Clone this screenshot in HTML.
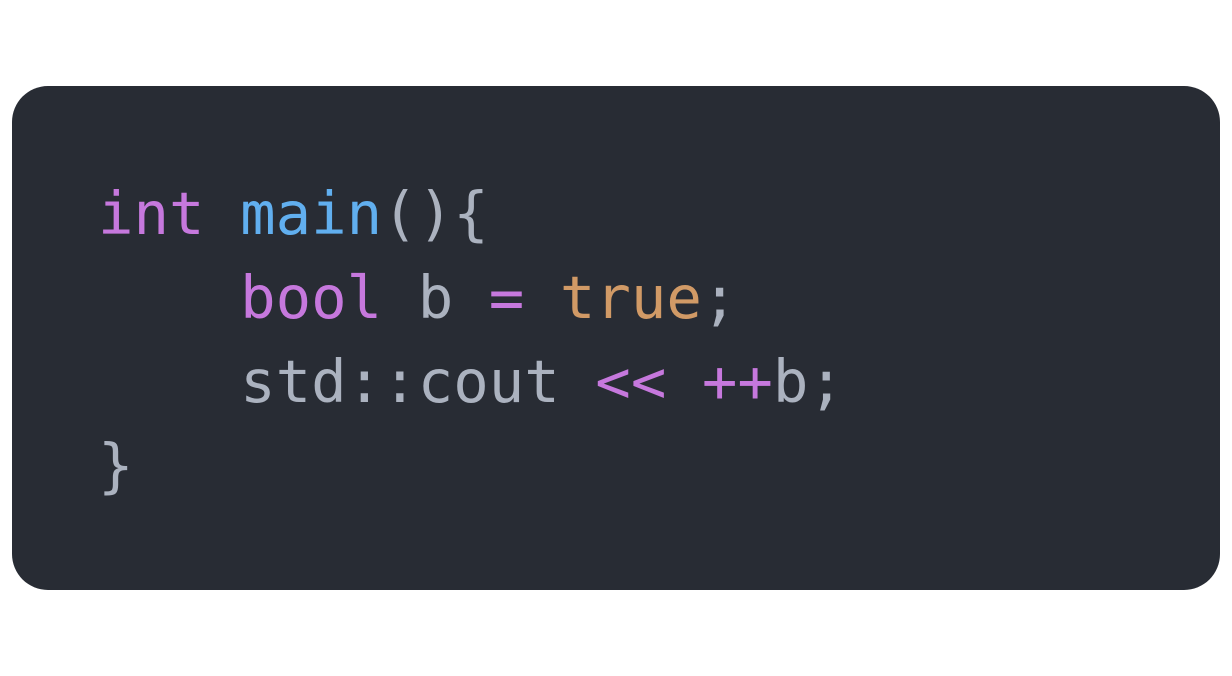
<!DOCTYPE html>
<html><head><style>
html,body{margin:0;padding:0;background:#fff;width:1232px;height:676px;overflow:hidden}
.box{position:absolute;left:12px;top:86px;width:1208px;height:504px;background:#282c34;border-radius:36px}
pre{position:absolute;left:98px;top:172px;margin:0;font-family:"DejaVu Sans Mono","Liberation Mono",monospace;font-size:59px;line-height:84px;color:#abb2bf}
.k{color:#c678dd}.f{color:#61afef}.n{color:#d19a66}
</style></head><body>
<div class="box"></div>
<pre><span class="k">int</span> <span class="f">main</span>(){
    <span class="k">bool</span> b <span class="k">=</span> <span class="n">true</span>;
    std::cout <span class="k">&lt;&lt;</span> <span class="k">++</span>b;
}</pre>
</body></html>
